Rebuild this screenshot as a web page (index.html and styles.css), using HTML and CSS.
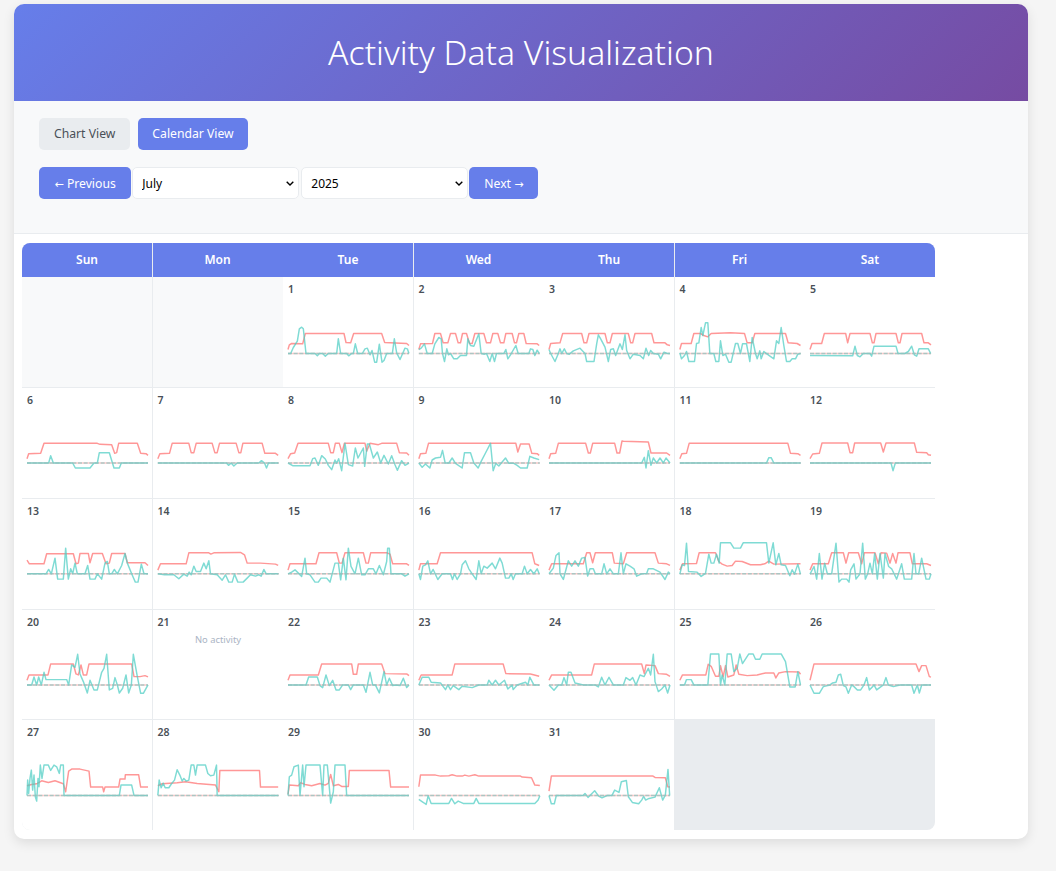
FILE: index.html
```html
<!DOCTYPE html>
<html lang="en">
<head>
<meta charset="utf-8">
<title>Activity Data Visualization</title>
<link rel="stylesheet" href="styles.css">
</head>
<body>
<div class="container">
  <header class="banner"><h1>Activity Data Visualization</h1></header>
  <section class="controls">
    <div class="tabs">
      <button class="btn btn-muted">Chart View</button>
      <button class="btn btn-tab">Calendar View</button>
    </div>
    <div class="nav">
      <button class="btn btn-prev"><span class="arrow">←</span> Previous</button>
      <select class="picker"><option>July</option></select>
      <select class="picker"><option>2025</option></select>
      <button class="btn">Next <span class="arrow">→</span></button>
    </div>
  </section>
  <section class="calendar-area">
    <div class="calendar">
      <div class="week">
        <div class="wd">Sun</div><div class="wd">Mon</div><div class="wd">Tue</div><div class="wd">Wed</div><div class="wd">Thu</div><div class="wd">Fri</div><div class="wd">Sat</div>
      </div>
      <div class="days">
        <div class="day empty"></div>
        <div class="day empty"></div>
        <div class="day"><div class="num">1</div><svg class="spark" viewBox="804 124.5 363 150"><line class="zero-a" x1="804" x2="1167" y1="234" y2="234"/><polyline class="red" points="804,222 808,208 815,204 848,205 856,174 972,174 978,201 992,202 1001,174 1085,174 1094,201 1160,204 1167,210"/><polyline class="teal" points="804,234 812,234 820,216 832,197 838,160 845,155 850,160 858,234 885,234 892,241 898,234 908,234 916,242 925,234 950,234 955,190 962,234 980,234 986,241 995,234 1000,234 1006,205 1013,234 1027,234 1035,220 1042,218 1050,238 1056,225 1064,260 1070,260 1078,206 1086,260 1092,255 1100,234 1117,234 1123,190 1130,232 1140,252 1148,234 1155,218 1162,220 1167,234"/><line class="zero-b" x1="804" x2="1167" y1="234" y2="234"/></svg></div>
        <div class="day"><div class="num">2</div><svg class="spark" viewBox="25.5 124.5 363 150"><line class="zero-a" x1="25" x2="388" y1="234" y2="234"/><polyline class="red" points="25,222 30,205 66,204 73,174 90,174 98,202 112,202 120,174 135,174 143,202 150,202 156,174 168,174 177,204 185,204 193,174 220,174 228,202 240,202 247,174 262,174 270,202 280,202 286,174 305,174 312,202 318,202 325,174 340,174 347,204 380,205 386,210"/><polyline class="teal" points="25,222 32,218 42,205 50,234 65,234 73,205 85,186 92,190 96,234 102,258 109,220 114,238 120,234 130,250 140,250 150,240 168,240 172,190 180,210 190,212 205,175 212,234 222,236 228,234 238,258 245,234 252,258 258,234 280,234 286,222 292,250 300,238 316,210 323,234 355,234 360,220 367,222 373,240 380,224 386,234"/><line class="zero-b" x1="25" x2="388" y1="234" y2="234"/></svg></div>
        <div class="day"><div class="num">3</div><svg class="spark" viewBox="417 124.5 363 150"><line class="zero-a" x1="417" x2="780" y1="234" y2="234"/><polyline class="red" points="417,222 422,204 450,202 458,174 515,174 522,202 530,202 537,174 585,174 592,202 600,202 607,174 655,174 662,202 668,202 675,174 725,174 732,202 765,202 772,208 780,210"/><polyline class="teal" points="417,222 422,234 435,258 445,234 450,220 455,234 463,220 470,234 478,236 490,226 510,218 525,234 530,258 552,258 560,205 565,178 572,190 585,215 595,258 602,222 610,220 617,240 630,205 637,222 645,178 650,225 660,250 670,236 690,240 700,250 708,218 716,240 722,225 730,234 745,236 752,250 762,230 772,234 780,234"/><line class="zero-b" x1="417" x2="780" y1="234" y2="234"/></svg></div>
        <div class="day"><div class="num">4</div><svg class="spark" viewBox="28.5 124.5 363 150"><line class="zero-a" x1="28" x2="391" y1="234" y2="234"/><polyline class="red" points="28,222 33,204 62,204 70,174 90,174 100,180 112,184 122,174 180,172 222,174 230,202 245,202 253,174 345,174 353,202 380,204 390,210"/><polyline class="teal" points="28,232 33,250 42,240 48,228 55,258 72,258 78,204 85,202 92,156 97,180 105,142 112,142 118,234 130,234 136,258 145,258 150,196 157,240 165,236 175,260 182,260 195,204 202,204 210,234 216,205 228,205 238,258 245,186 255,234 260,250 268,226 272,250 280,228 290,236 310,250 318,196 325,204 332,156 340,210 348,258 358,258 365,250 375,250 382,236 390,234"/><line class="zero-b" x1="28" x2="391" y1="234" y2="234"/></svg></div>
        <div class="day"><div class="num">5</div><svg class="spark" viewBox="420 124.5 363 150"><line class="zero-a" x1="420" x2="783" y1="234" y2="234"/><polyline class="red" points="420,222 426,204 455,204 463,174 527,174 533,202 540,174 600,174 607,202 612,202 618,174 678,174 685,202 690,202 696,174 755,174 762,202 775,202 783,208"/><polyline class="teal" points="420,240 548,241 555,212 562,240 570,244 580,234 600,234 605,242 612,212 620,212 678,212 684,234 705,234 715,228 725,212 733,238 740,242 747,220 775,220 782,234"/><line class="zero-b" x1="420" x2="783" y1="234" y2="234"/></svg></div>

        <div class="day"><div class="num">6</div><svg class="spark" viewBox="21 457 363 150"><line class="zero-a" x1="21" x2="384" y1="565" y2="565"/><polyline class="red" points="21,552 26,537 62,536 72,506 232,506 240,509 275,510 284,536 290,534 296,506 352,506 362,536 378,537 384,542"/><polyline class="teal" points="21,565 86,565 92,543 100,565 158,565 166,580 210,580 222,565 232,565 238,534 268,534 282,580 298,580 304,565 384,565"/><line class="zero-b" x1="21" x2="384" y1="565" y2="565"/></svg></div>
        <div class="day"><div class="num">7</div><svg class="spark" viewBox="412.5 457 363 150"><line class="zero-a" x1="412" x2="775" y1="565" y2="565"/><polyline class="red" points="412,552 418,537 447,536 455,506 505,506 512,534 520,534 527,506 575,506 583,534 590,534 597,506 647,506 655,534 661,534 667,506 725,506 733,536 765,536 773,542"/><polyline class="teal" points="412,565 618,565 624,572 632,565 640,574 650,565 715,565 723,558 732,565 738,580 744,565 773,565"/><line class="zero-b" x1="412" x2="775" y1="565" y2="565"/></svg></div>
        <div class="day"><div class="num">8</div><svg class="spark" viewBox="804 457 363 150"><line class="zero-a" x1="804" x2="1167" y1="565" y2="565"/><polyline class="red" points="804,552 812,537 824,535 834,506 925,506 932,534 940,534 946,506 958,506 966,534 973,506 1035,506 1040,530 1050,506 1075,510 1085,506 1130,506 1138,534 1160,535 1167,542"/><polyline class="teal" points="804,565 818,573 870,573 878,552 885,550 895,572 905,543 916,553 925,572 935,585 945,556 950,566 956,552 965,588 975,506 985,570 998,574 1006,520 1014,550 1030,520 1034,575 1042,508 1048,508 1060,550 1072,532 1082,565 1092,542 1105,568 1115,543 1125,570 1132,587 1145,558 1155,572 1167,565"/><line class="zero-b" x1="804" x2="1167" y1="565" y2="565"/></svg></div>
        <div class="day"><div class="num">9</div><svg class="spark" viewBox="25.5 457 363 150"><line class="zero-a" x1="25" x2="388" y1="565" y2="565"/><polyline class="red" points="25,552 30,537 46,536 54,506 316,506 322,532 330,508 356,508 364,536 380,537 386,542"/><polyline class="teal" points="25,565 35,578 45,568 58,580 65,556 75,550 90,548 96,527 104,565 115,565 125,550 135,566 155,580 162,534 180,534 190,565 203,580 212,560 225,535 240,506 248,588 256,566 265,574 285,550 295,566 310,566 320,572 330,580 350,580 358,545 370,550 386,555"/><line class="zero-b" x1="25" x2="388" y1="565" y2="565"/></svg></div>
        <div class="day"><div class="num">10</div><svg class="spark" viewBox="417 457 363 150"><line class="zero-a" x1="417" x2="780" y1="565" y2="565"/><polyline class="red" points="417,552 422,537 437,536 445,506 527,506 535,535 541,535 548,506 614,506 621,535 629,535 636,499 640,500 715,502 723,535 770,535 780,542"/><polyline class="teal" points="417,565 695,565 703,548 708,580 715,528 723,572 730,550 740,565 750,550 760,565 768,550 780,565"/><line class="zero-b" x1="417" x2="780" y1="565" y2="565"/></svg></div>
        <div class="day"><div class="num">11</div><svg class="spark" viewBox="28.5 457 363 150"><line class="zero-a" x1="28" x2="391" y1="565" y2="565"/><polyline class="red" points="28,552 34,537 48,536 56,506 352,506 360,536 382,537 390,542"/><polyline class="teal" points="28,565 288,565 295,549 302,549 310,565 390,565"/><line class="zero-b" x1="28" x2="391" y1="565" y2="565"/></svg></div>
        <div class="day"><div class="num">12</div><svg class="spark" viewBox="420 457 363 150"><line class="zero-a" x1="420" x2="783" y1="565" y2="565"/><polyline class="red" points="420,552 428,538 448,536 456,505 533,505 540,534 548,534 554,505 632,505 640,532 648,505 733,505 740,533 770,534 775,540 783,542"/><polyline class="teal" points="420,565 663,565 669,588 676,565 783,565"/><line class="zero-b" x1="420" x2="783" y1="565" y2="565"/></svg></div>

        <div class="day"><div class="num">13</div><svg class="spark" viewBox="21 129.6 363 150"><line class="zero-a" x1="21" x2="384" y1="237" y2="237"/><polyline class="red" points="21,196 28,207 72,207 80,177 160,177 168,207 175,205 180,176 205,176 210,204 218,176 247,176 258,207 268,205 275,176 315,176 322,204 375,204 384,212"/><polyline class="teal" points="21,237 78,237 86,224 94,237 105,190 113,253 130,253 137,160 145,253 152,222 158,237 165,205 172,237 195,237 203,212 210,253 225,253 232,237 245,253 255,205 262,200 268,237 275,237 283,224 292,237 305,212 315,176 322,205 335,237 346,262 354,262 364,208 372,237 384,237"/><line class="zero-b" x1="21" x2="384" y1="237" y2="237"/></svg></div>
        <div class="day"><div class="num">14</div><svg class="spark" viewBox="412.5 129.6 363 150"><line class="zero-a" x1="412" x2="775" y1="237" y2="237"/><polyline class="red" points="412,226 420,207 497,207 505,174 565,174 571,178 580,174 660,173 672,180 680,205 720,205 765,208 773,212"/><polyline class="teal" points="412,237 432,240 460,240 475,252 490,238 500,244 506,232 512,240 520,214 527,230 540,230 550,205 557,222 565,198 570,237 590,240 605,256 615,240 625,262 635,262 642,238 652,262 668,262 680,250 690,240 705,244 715,240 722,244 730,224 737,237 773,237"/><line class="zero-b" x1="412" x2="775" y1="237" y2="237"/></svg></div>
        <div class="day"><div class="num">15</div><svg class="spark" viewBox="804 129.6 363 150"><line class="zero-a" x1="804" x2="1167" y1="237" y2="237"/><polyline class="red" points="804,226 810,207 888,207 897,174 950,174 958,205 966,205 975,174 1030,174 1038,205 1045,205 1052,174 1100,174 1110,178 1118,207 1160,207 1167,212"/><polyline class="teal" points="804,237 815,232 825,225 835,235 845,245 855,190 860,237 870,240 885,262 895,262 903,250 920,250 930,262 945,205 955,205 962,255 970,190 978,255 985,160 993,215 1005,237 1015,190 1025,240 1035,240 1045,222 1060,222 1068,237 1078,212 1090,240 1100,200 1103,160 1108,160 1113,237 1145,237 1155,244 1167,237"/><line class="zero-b" x1="804" x2="1167" y1="237" y2="237"/></svg></div>
        <div class="day"><div class="num">16</div><svg class="spark" viewBox="25.5 129.6 363 150"><line class="zero-a" x1="25" x2="388" y1="237" y2="237"/><polyline class="red" points="25,226 30,207 80,207 90,174 365,174 373,207 386,212"/><polyline class="teal" points="25,237 30,254 37,214 45,210 52,198 60,237 68,224 82,254 95,237 120,237 126,254 132,237 140,254 150,237 155,210 165,198 175,222 185,237 197,254 205,198 212,237 220,214 230,220 245,205 255,222 268,190 275,205 285,250 295,250 302,237 308,254 315,237 335,237 342,214 350,237 360,224 370,237 380,222 386,237"/><line class="zero-b" x1="25" x2="388" y1="237" y2="237"/></svg></div>
        <div class="day"><div class="num">17</div><svg class="spark" viewBox="417 129.6 363 150"><line class="zero-a" x1="417" x2="780" y1="237" y2="237"/><polyline class="red" points="417,226 425,207 520,207 530,174 540,174 548,204 556,174 607,174 613,205 640,207 650,174 735,174 745,205 770,207 780,212"/><polyline class="teal" points="417,237 430,220 438,182 447,174 450,237 460,254 475,198 485,214 495,198 505,214 515,190 525,188 533,244 540,222 550,222 556,237 575,237 582,207 590,237 600,222 610,237 625,237 633,174 640,237 648,207 660,214 672,222 680,244 695,237 710,236 715,222 730,222 750,232 765,254 775,232 780,237"/><line class="zero-b" x1="417" x2="780" y1="237" y2="237"/></svg></div>
        <div class="day"><div class="num">18</div><svg class="spark" viewBox="28.5 129.6 363 150"><line class="zero-a" x1="28" x2="391" y1="237" y2="237"/><polyline class="red" points="28,226 36,207 78,206 86,174 135,174 145,200 155,208 170,214 185,212 195,199 215,200 240,210 270,210 285,206 295,199 310,208 390,207"/><polyline class="teal" points="28,238 35,210 42,212 48,145 54,230 80,232 92,245 105,236 115,178 122,205 130,205 138,178 146,205 150,144 180,144 190,160 210,160 218,144 288,144 295,205 308,144 316,210 325,176 332,210 345,212 358,243 365,225 372,238 382,208 390,238"/><line class="zero-b" x1="28" x2="391" y1="237" y2="237"/></svg></div>
        <div class="day"><div class="num">19</div><svg class="spark" viewBox="420 129.6 363 150"><line class="zero-a" x1="420" x2="783" y1="237" y2="237"/><polyline class="red" points="420,226 428,207 475,207 485,174 520,174 528,205 536,174 565,174 575,207 583,174 615,174 625,207 633,174 650,175 660,205 668,176 678,205 684,174 720,174 727,207 770,207 783,212"/><polyline class="teal" points="420,238 432,215 440,253 448,176 456,253 464,205 472,237 485,237 498,145 507,262 515,253 530,253 537,262 542,225 552,207 558,253 570,237 578,145 586,253 593,237 600,205 607,237 614,176 622,253 630,176 640,250 645,176 656,215 665,222 680,253 695,207 703,253 725,253 732,176 738,237 746,237 755,190 768,253 778,253 783,237"/><line class="zero-b" x1="420" x2="783" y1="237" y2="237"/></svg></div>

        <div class="day"><div class="num">20</div><svg class="spark" viewBox="21 462.15 363 150"><line class="zero-a" x1="21" x2="384" y1="570" y2="570"/><polyline class="red" points="21,556 27,540 84,540 92,507 160,507 168,537 175,540 183,510 190,540 200,540 207,507 335,507 342,545 360,545 375,542 384,546"/><polyline class="teal" points="21,570 35,570 42,546 50,570 56,546 64,570 72,532 78,554 140,554 146,570 155,510 165,517 173,478 180,537 190,560 202,594 210,556 222,585 232,585 245,532 252,520 260,478 268,585 278,580 285,548 292,570 298,594 308,580 318,540 326,594 334,570 340,478 352,545 362,595 370,595 384,570"/><line class="zero-b" x1="21" x2="384" y1="570" y2="570"/></svg></div>
        <div class="day"><div class="num num-tight">21</div><div class="none">No activity</div></div>
        <div class="day"><div class="num">22</div><svg class="spark" viewBox="804 462.15 363 150"><line class="zero-a" x1="804" x2="1167" y1="570" y2="570"/><polyline class="red" points="804,556 810,540 895,540 905,507 995,507 1000,538 1010,538 1015,507 1085,507 1095,536 1160,537 1167,542"/><polyline class="teal" points="804,570 858,570 866,546 892,546 900,572 908,578 918,540 928,572 938,556 948,585 958,585 968,570 985,570 992,584 1000,570 1030,570 1038,592 1050,532 1058,570 1066,570 1078,594 1092,530 1100,570 1108,550 1118,572 1125,570 1140,572 1150,550 1160,578 1167,570"/><line class="zero-b" x1="804" x2="1167" y1="570" y2="570"/></svg></div>
        <div class="day"><div class="num">23</div><svg class="spark" viewBox="25.5 462.15 363 150"><line class="zero-a" x1="25" x2="388" y1="570" y2="570"/><polyline class="red" points="25,556 32,540 125,540 133,507 278,507 286,536 360,537 386,544"/><polyline class="teal" points="25,570 35,547 55,547 62,562 90,564 105,584 112,570 120,584 128,572 145,584 155,574 185,578 205,570 230,570 235,556 245,570 255,556 265,570 282,556 292,582 305,570 308,584 320,570 345,562 352,570 358,547 370,570 386,570"/><line class="zero-b" x1="25" x2="388" y1="570" y2="570"/></svg></div>
        <div class="day"><div class="num">24</div><svg class="spark" viewBox="417 462.15 363 150"><line class="zero-a" x1="417" x2="780" y1="570" y2="570"/><polyline class="red" points="417,556 425,540 545,540 553,507 695,507 703,536 708,510 735,512 745,536 770,538 780,544"/><polyline class="teal" points="417,570 432,586 445,570 455,570 462,548 470,570 475,532 483,532 495,564 520,570 555,570 565,576 575,547 585,570 597,547 610,570 640,570 648,548 660,556 668,548 678,570 690,540 702,545 715,520 722,540 730,478 735,560 745,590 755,582 765,570 773,594 780,570"/><line class="zero-b" x1="417" x2="780" y1="570" y2="570"/></svg></div>
        <div class="day"><div class="num">25</div><svg class="spark" viewBox="28.5 462.15 363 150"><line class="zero-a" x1="28" x2="391" y1="570" y2="570"/><polyline class="red" points="28,556 36,540 106,540 113,508 122,514 135,544 145,544 150,512 158,546 165,512 172,546 190,540 197,510 205,538 230,542 260,540 285,534 310,534 316,549 325,534 345,530 385,531 390,538"/><polyline class="teal" points="28,570 42,570 48,554 62,554 70,570 112,570 120,477 145,477 150,570 155,540 163,570 170,477 182,477 190,530 200,520 208,477 216,506 235,477 248,477 255,493 268,493 275,477 332,477 345,500 358,576 374,576 382,530 390,570"/><line class="zero-b" x1="28" x2="391" y1="570" y2="570"/></svg></div>
        <div class="day"><div class="num">26</div><svg class="spark" viewBox="420 462.15 363 150"><line class="zero-a" x1="420" x2="783" y1="570" y2="570"/><polyline class="red" points="420,556 432,507 738,507 747,530 755,512 768,512 778,545 783,546"/><polyline class="teal" points="420,570 432,595 448,595 460,575 480,570 488,564 498,562 505,540 512,538 520,572 528,576 535,595 545,570 552,575 562,585 572,585 582,570 590,548 598,585 608,575 612,570 620,585 640,570 648,548 655,570 670,575 690,570 725,570 732,595 742,570 748,594 755,570 783,570"/><line class="zero-b" x1="420" x2="783" y1="570" y2="570"/></svg></div>

        <div class="day"><div class="num">27</div><svg class="spark" viewBox="21 134.7 363 150"><line class="zero-a" x1="21" x2="384" y1="241" y2="241"/><polyline class="red" points="21,212 35,208 50,206 65,197 85,202 105,197 130,206 137,230 146,168 155,162 180,162 207,168 212,216 248,216 251,230 255,216 296,216 300,192 315,192 316,179 356,179 362,216 384,216"/><polyline class="teal" points="21,241 23,195 26,235 30,190 34,165 38,225 42,180 46,245 50,258 54,190 57,215 61,150 66,190 72,150 85,150 92,166 102,150 110,155 118,175 122,150 130,150 132,241 298,241 303,210 335,210 342,241 384,241"/><line class="zero-b" x1="21" x2="384" y1="241" y2="241"/></svg></div>
        <div class="day"><div class="num">28</div><svg class="spark" viewBox="412.5 134.7 363 150"><line class="zero-a" x1="412" x2="775" y1="241" y2="241"/><polyline class="red" points="412,212 425,206 470,203 495,200 530,205 585,210 595,230 598,166 717,166 720,216 773,216"/><polyline class="teal" points="412,241 416,195 422,218 428,204 434,218 445,218 453,206 462,195 470,164 478,180 485,198 490,190 497,198 505,195 512,150 520,150 525,180 530,150 555,150 562,175 570,182 580,180 588,150 590,241 773,241"/><line class="zero-b" x1="412" x2="775" y1="241" y2="241"/></svg></div>
        <div class="day"><div class="num">29</div><svg class="spark" viewBox="804 134.7 363 150"><line class="zero-a" x1="804" x2="1167" y1="241" y2="241"/><polyline class="red" points="804,238 808,210 835,212 842,203 855,208 875,212 900,205 915,210 925,205 932,178 940,212 955,208 965,214 985,214 988,166 1107,166 1112,216 1167,216"/><polyline class="teal" points="804,241 808,185 815,180 822,155 835,150 840,241 848,150 852,215 858,150 900,150 908,241 912,150 922,150 930,240 932,264 940,230 945,150 975,150 980,241 1167,241"/><line class="zero-b" x1="804" x2="1167" y1="241" y2="241"/></svg></div>
        <div class="day"><div class="num">30</div><svg class="spark" viewBox="25.5 134.7 363 150"><line class="zero-a" x1="25" x2="388" y1="241" y2="241"/><polyline class="red" points="25,215 30,180 75,180 90,183 115,182 125,179 140,183 155,183 163,180 175,183 193,179 205,183 330,183 335,186 363,188 373,210 388,211"/><polyline class="teal" points="25,253 40,263 47,268 53,242 62,265 115,265 123,250 133,266 143,258 158,265 190,265 197,250 205,265 373,265 383,255 388,242"/><line class="zero-b" x1="25" x2="388" y1="241" y2="241"/></svg></div>
        <div class="day"><div class="num">31</div><svg class="spark" viewBox="417 134.7 363 150"><line class="zero-a" x1="417" x2="780" y1="241" y2="241"/><polyline class="red" points="417,228 424,183 729,183 735,187 766,188 773,215 780,216"/><polyline class="teal" points="417,241 424,266 433,266 439,241 519,241 525,235 534,247 554,227 566,243 576,248 593,241 606,241 614,225 627,232 634,200 649,196 655,245 667,262 686,266 695,255 701,244 707,255 717,250 735,246 748,218 758,255 766,240 774,163 779,241"/><line class="zero-b" x1="417" x2="780" y1="241" y2="241"/></svg></div>
      </div>
    </div>
  </section>
</div>
</body>
</html>
```
FILE: styles.css
```css
* { box-sizing: border-box; }
html, body { margin: 0; height: 100%; }
body {
  background: #f5f5f5;
  padding: 4px 28px 0 14px;
  font-family: "Noto Sans", "Open Sans", sans-serif;
  color: #495057;
}
.container {
  height: 835px;
  background: #fff;
  border-radius: 10px;
  box-shadow: 0 4px 12px rgba(0, 0, 0, 0.1);
  overflow: hidden;
}
.banner {
  height: 97px;
  padding-bottom: 2px;
  background: linear-gradient(135deg, #667eea 0%, #764ba2 100%);
  display: flex;
  align-items: center;
  justify-content: center;
}
.banner h1 {
  margin: 0;
  color: #fff;
  font-size: 33.7px;
  font-weight: 300;
  line-height: 48px;
}
.controls {
  height: 133px;
  background: #f8f9fa;
  border-bottom: 1px solid #e9ecef;
  padding: 17px 25px;
}
.tabs { display: flex; gap: 8px; margin-bottom: 17px; }
.tabs .btn { padding-bottom: 2px; }
.nav { display: flex; }
.btn {
  height: 32px;
  padding: 0 15px;
  border: 0;
  border-radius: 5px;
  background: #667eea;
  color: #fff;
  font-family: inherit;
  font-size: 12.2px;
}
.btn-muted { background: #e9ecef; color: #495057; }
.tabs .btn-tab { padding: 0 14px 2px; }
.btn-prev { padding: 0 15.5px; }
.arrow { font-family: "DejaVu Sans", sans-serif; font-size: 11px; }
.picker {
  width: 167px;
  height: 32px;
  margin: 0 1px;
  padding: 0 9px;
  border: 1px solid #e9ecef;
  border-radius: 5px;
  appearance: none;
  background: #fff url("data:image/svg+xml,%3Csvg xmlns='http://www.w3.org/2000/svg' width='8' height='5'%3E%3Cpath d='M.7.7 4 4l3.3-3.3' fill='none' stroke='%23000' stroke-width='1.4'/%3E%3C/svg%3E") no-repeat right 4px center;
  color: #000;
  font-family: inherit;
  font-size: 12px;
}
.calendar-area { padding: 9px 8px; }
.calendar {
  width: 913px;
  height: 587px;
  background: #e9ecef;
  border-radius: 8px;
  overflow: hidden;
}
.week, .days {
  display: grid;
  grid-template-columns: repeat(7, 130px);
  column-gap: 0.5px;
}
.wd {
  height: 34px;
  padding-bottom: 2px;
  background: #667eea;
  color: #fff;
  font-size: 12px;
  font-weight: 600;
  display: flex;
  align-items: center;
  justify-content: center;
}
.days { grid-auto-rows: 109.85px; row-gap: 1px; }
.day { background: #fff; padding: 5px 4px 0 5px; }
.day.empty { background: #f8f9fa; }
.num {
  height: 34.5px;
  font-size: 10.5px;
  font-weight: 600;
  line-height: 15px;
  color: #495057;
}
.num-tight { height: 18px; }
.none {
  text-align: center;
  font-size: 9.4px;
  line-height: 14px;
  color: #aab4c4;
}
.spark { display: block; width: 121px; height: 50px; overflow: visible; }
.spark polyline { fill: none; stroke-width: 4.4; stroke-linejoin: round; }
.spark .red { stroke: #ff6b6b; stroke-opacity: 0.7; }
.spark .teal { stroke: #4ecdc4; stroke-opacity: 0.72; }
.spark .zero-a { stroke: #ffb3b3; stroke-width: 4.4; stroke-opacity: 0.7; }
.spark .zero-b { stroke: #8fc4c0; stroke-width: 4.4; stroke-opacity: 0.75; stroke-dasharray: 12 5; }
```
